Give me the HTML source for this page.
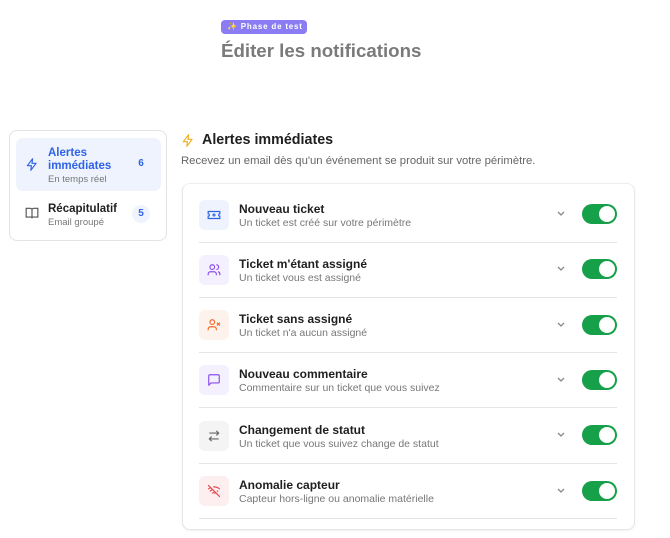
<!DOCTYPE html>
<html><head><meta charset="utf-8"><style>
*{box-sizing:border-box;margin:0;padding:0}
body{width:670px;height:538px;background:#fff;font-family:"Liberation Sans",sans-serif;position:relative;overflow:hidden;color:#1f1f1f}
.badge{position:absolute;left:221px;top:20px;width:86px;height:14px;border-radius:4px;background:#8c7cf3;color:#fff;font-size:8px;font-weight:bold;letter-spacing:.8px;line-height:14px;padding-left:6px}
h1{position:absolute;left:221px;top:40px;font-size:18.7px;color:#7a7a7a;font-weight:bold}
.side{position:absolute;left:9px;top:130px;width:158px;height:111px;border:1px solid #e3e3e3;border-radius:8px}
.act{position:absolute;left:6px;top:7px;width:145px;height:53px;background:#eef3fe;border-radius:7px}
.st{position:absolute;font-size:11.5px;font-weight:bold}
.ss{position:absolute;font-size:9.5px;color:#777}
.cnt{position:absolute;width:18px;height:18px;border-radius:9px;font-size:10px;font-weight:bold;color:#2f63e6;text-align:center;line-height:18px}
.panel{position:absolute;left:182px;top:183px;width:453px;height:347px;border:1px solid #e6e6e6;border-top-color:#eee;border-radius:8px;box-shadow:0 1px 2px rgba(0,0,0,.06)}
.row{position:absolute;left:199px;width:418px;height:43px;border-bottom:1px solid #e5e5e5}
.ib{position:absolute;left:0;top:0;width:30px;height:30px;border-radius:6px;display:flex;align-items:center;justify-content:center}
.rt{position:absolute;left:40px;top:2px;font-size:12px;font-weight:bold;color:#1f1f1f}
.rs{position:absolute;left:40px;top:17px;font-size:10.5px;color:#777}
.c{position:absolute;left:556px}
.t{position:absolute;left:582px;width:35px;height:20px;border-radius:10px;background:#16a04a}
.t:after{content:"";position:absolute;right:2px;top:2px;width:16px;height:16px;border-radius:8px;background:#fff}
</style></head><body>
<div class="badge">✨ Phase de test</div>
<h1>Éditer les notifications</h1>
<div class="side">
 <div class="act"></div>
 <svg style="position:absolute;left:15px;top:26px" width="14" height="15" viewBox="0 0 24 24" fill="none" stroke="#2f63e6" stroke-width="2" stroke-linejoin="round"><path d="M13 2L4 14h7l-1 8 9-12h-7z"/></svg>
 <div class="st" style="left:38px;top:16px;color:#2f63e6;line-height:13px">Alertes<br>immédiates</div>
 <div class="ss" style="left:38px;top:43px">En temps réel</div>
 <div class="cnt" style="left:122px;top:24px">6</div>
 <svg style="position:absolute;left:15px;top:76px" width="14" height="12" viewBox="0 0 24 20" fill="none" stroke="#555" stroke-width="2"><path d="M2 2h7a3 3 0 013 3v14a2 2 0 00-2-2H2zM22 2h-7a3 3 0 00-3 3v14a2 2 0 012-2h8z"/></svg>
 <div class="st" style="left:38px;top:72px">Récapitulatif</div>
 <div class="ss" style="left:38px;top:86px">Email groupé</div>
 <div class="cnt" style="left:122px;top:74px;background:#eef3fe">5</div>
</div>
<svg style="position:absolute;left:181px;top:133px" width="14" height="15" viewBox="0 0 24 24" fill="none" stroke="#f0b020" stroke-width="2" stroke-linejoin="round"><path d="M13 2L4 14h7l-1 8 9-12h-7z"/></svg>
<div style="position:absolute;left:202px;top:132px;font-size:14.3px;font-weight:bold">Alertes immédiates</div>
<div style="position:absolute;left:181px;top:155px;font-size:11.3px;color:#666">Recevez un email dès qu'un événement se produit sur votre périmètre.</div>
<div class="panel"></div>

<div class="row" style="top:200px"><div class="ib" style="background:#eef3fe"><svg width="14" height="10" viewBox="0 0 24 16" fill="none" stroke="#2f63e6" stroke-width="2"><path d="M2 2h20v4a2 2 0 000 4v4H2v-4a2 2 0 000-4z"/><path d="M12 5v6M9 8h6"/></svg></div><div class="rt">Nouveau ticket</div><div class="rs">Un ticket est créé sur votre périmètre</div></div>
<div class="row" style="top:255px"><div class="ib" style="background:#f5f0fe"><svg width="14" height="14" viewBox="0 0 24 24" fill="none" stroke="#8b4ef0" stroke-width="2"><circle cx="9" cy="7" r="4"/><path d="M2 21v-2a4 4 0 014-4h6a4 4 0 014 4v2M16 3a4 4 0 010 8M22 21v-2a4 4 0 00-3-4"/></svg></div><div class="rt">Ticket m'étant assigné</div><div class="rs">Un ticket vous est assigné</div></div>
<div class="row" style="top:310px"><div class="ib" style="background:#fef3ec"><svg width="14" height="14" viewBox="0 0 24 24" fill="none" stroke="#f06a2a" stroke-width="2"><circle cx="9" cy="7" r="4"/><path d="M2 21v-2a4 4 0 014-4h6a4 4 0 014 4v2M17 8l5 5M22 8l-5 5"/></svg></div><div class="rt">Ticket sans assigné</div><div class="rs">Un ticket n'a aucun assigné</div></div>
<div class="row" style="top:365px"><div class="ib" style="background:#f5f0fe"><svg width="14" height="14" viewBox="0 0 24 24" fill="none" stroke="#8b4ef0" stroke-width="2" stroke-linejoin="round"><path d="M21 15a2 2 0 01-2 2H7l-4 4V5a2 2 0 012-2h14a2 2 0 012 2z"/></svg></div><div class="rt">Nouveau commentaire</div><div class="rs">Commentaire sur un ticket que vous suivez</div></div>
<div class="row" style="top:421px"><div class="ib" style="background:#f4f4f5"><svg width="14" height="14" viewBox="0 0 24 24" fill="none" stroke="#666" stroke-width="2"><path d="M20 7H4M16 3l4 4-4 4M4 17h16M8 13l-4 4 4 4"/></svg></div><div class="rt">Changement de statut</div><div class="rs">Un ticket que vous suivez change de statut</div></div>
<div class="row" style="top:476px"><div class="ib" style="background:#fdeff0"><svg width="14" height="14" viewBox="0 0 24 24" fill="none" stroke="#e5484d" stroke-width="2"><path d="M2 2l20 20M5 12.5a10 10 0 015-2.7M2 8.8a15 15 0 014.2-2.6M10.7 5a15 15 0 0111.3 3.8M16.8 11.7a10 10 0 012.2 1.3M8.5 16a5 5 0 016 0M12 20h.01"/></svg></div><div class="rt">Anomalie capteur</div><div class="rs">Capteur hors-ligne ou anomalie matérielle</div></div>

<svg class="c" style="top:210px" width="10" height="8" viewBox="0 0 10 8"><path d="M2 2l3 3 3-3" fill="none" stroke="#888" stroke-width="1.3"/></svg><div class="t" style="top:204px"></div>
<svg class="c" style="top:265px" width="10" height="8" viewBox="0 0 10 8"><path d="M2 2l3 3 3-3" fill="none" stroke="#888" stroke-width="1.3"/></svg><div class="t" style="top:259px"></div>
<svg class="c" style="top:321px" width="10" height="8" viewBox="0 0 10 8"><path d="M2 2l3 3 3-3" fill="none" stroke="#888" stroke-width="1.3"/></svg><div class="t" style="top:315px"></div>
<svg class="c" style="top:376px" width="10" height="8" viewBox="0 0 10 8"><path d="M2 2l3 3 3-3" fill="none" stroke="#888" stroke-width="1.3"/></svg><div class="t" style="top:370px"></div>
<svg class="c" style="top:431px" width="10" height="8" viewBox="0 0 10 8"><path d="M2 2l3 3 3-3" fill="none" stroke="#888" stroke-width="1.3"/></svg><div class="t" style="top:425px"></div>
<svg class="c" style="top:487px" width="10" height="8" viewBox="0 0 10 8"><path d="M2 2l3 3 3-3" fill="none" stroke="#888" stroke-width="1.3"/></svg><div class="t" style="top:481px"></div>
</body></html>
